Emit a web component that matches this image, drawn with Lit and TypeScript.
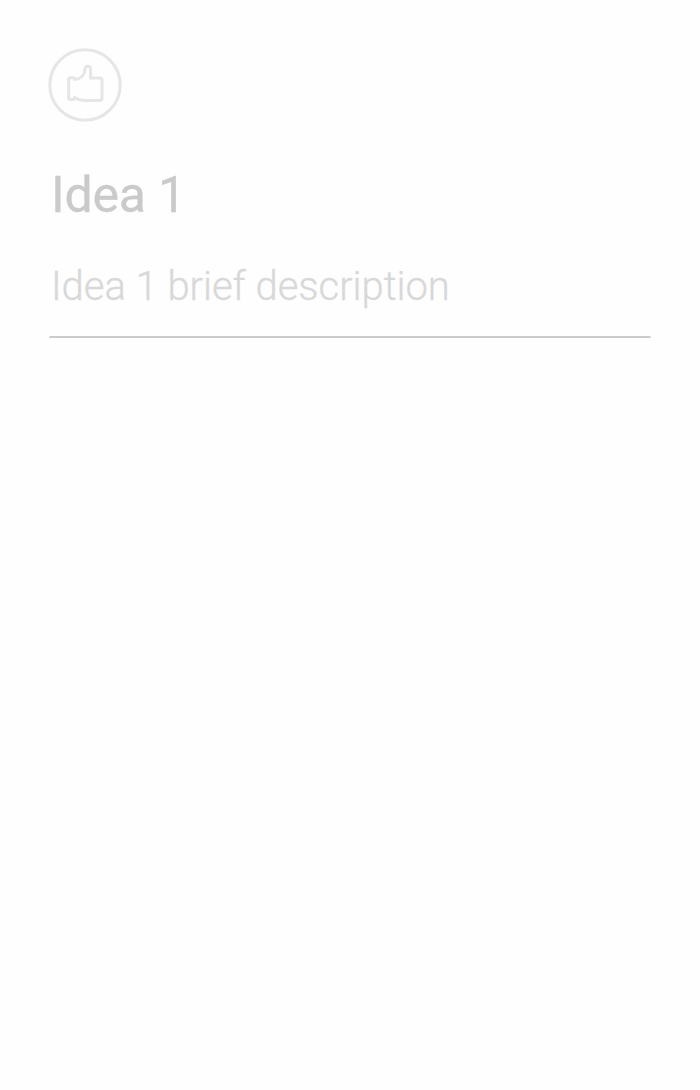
import { LitElement, html, css } from "lit";
import { customElement } from "lit/decorators.js";

@customElement("app-root")
class AppRoot extends LitElement {
  static styles = css`
    :host {
      display: block;
      box-sizing: border-box;
      min-height: 1090px;
      padding: 48px 49px 0 48px;
      background: #fefefe;
      font-family: Roboto, sans-serif;
    }
    .icon {
      display: block;
      width: 74px;
      height: 74px;
    }
    .title {
      margin: 43px 0 0 3px;
      font-size: 50px;
      line-height: 60px;
      font-weight: 400;
      letter-spacing: -0.2px;
      color: #cacaca;
      white-space: nowrap;
      -webkit-text-stroke: 0.3px #cacaca;
    }
    .description {
      margin: 37px 0 0 3px;
      font-size: 40px;
      line-height: 50px;
      font-weight: 300;
      letter-spacing: -0.04px;
      color: #d8d8d8;
      white-space: nowrap;
      -webkit-text-stroke: 0.3px #d8d8d8;
    }
    .rule {
      box-sizing: border-box;
      margin: 24px 0 0 1px;
      height: 2px;
      background: #cbcbcb;
      background-clip: padding-box;
      border: solid #e4e4e4;
      border-width: 0 1px;
    }
  `;

  render() {
    return html`
      <svg class="icon" viewBox="0 0 74 74" fill="none" stroke="#e6e6e6" stroke-width="3" stroke-linejoin="round" stroke-linecap="round">
        <circle cx="37" cy="37" r="35.2" />
        <path d="M26.5 31.4C32 31 36.6 27.5 37 21.5C37.1 17.3 42.6 17.3 42.6 21.5V30H51.8Q54 30 54 32.2V50.3Q54 52.5 51.8 52.5H38Q31 52.3 26.5 49.6" />
        <path d="M26.3 29.8H22Q20.7 29.8 20.7 31.2V50Q20.7 51.5 22 51.5H25.5" />
      </svg>
      <div class="title">Idea 1</div>
      <div class="description">Idea 1 brief description</div>
      <div class="rule"></div>
    `;
  }
}
